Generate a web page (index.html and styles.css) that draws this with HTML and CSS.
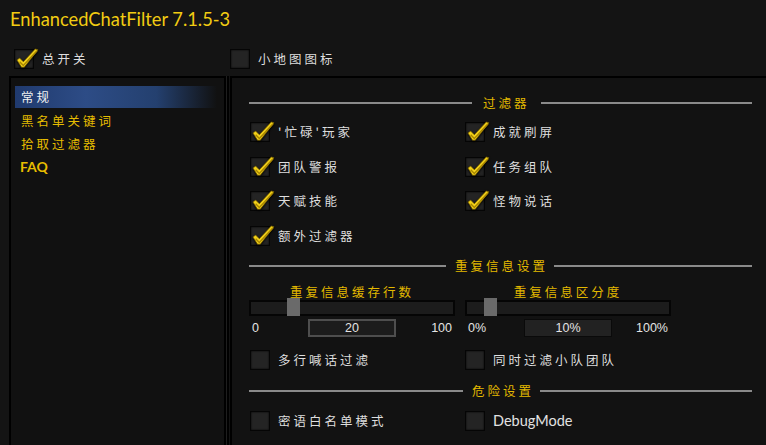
FILE: index.html
```html
<!DOCTYPE html>
<html>
<head>
<meta charset="utf-8">
<link rel="stylesheet" href="styles.css">
</head>
<body>
<div class="frame">
  <div class="title">EnhancedChatFilter 7.1.5-3</div>
  <div class="topbar">
    <label class="cb cb-main"><span class="box checked"><svg class="tick" viewBox="0 0 26 24"><path d="M2 13 L5 11 L9 15 L22 1 L25 2 L10 21 L7 21 Z" fill="#f3d21a" stroke="#6b5500" stroke-width="0.8"/><path d="M5 15 L9 19 L24 3" fill="none" stroke="#a88600" stroke-width="1.6"/></svg></span><span class="cjk">总开关</span></label>
    <label class="cb cb-mini"><span class="box"></span><span class="cjk">小地图图标</span></label>
  </div>
  <div class="main">
    <nav class="side">
      <div class="item active cjk">常规</div>
      <div class="item cjk">黑名单关键词</div>
      <div class="item cjk">拾取过滤器</div>
      <div class="item latin">FAQ</div>
    </nav>
    <section class="content">
      <div class="hdr hdr1"><span class="line"></span><span class="hdr-text cjk">过滤器</span><span class="line"></span></div>
      <div class="grid">
        <label class="cb"><span class="box checked"><svg class="tick" viewBox="0 0 26 24"><path d="M2 13 L5 11 L9 15 L22 1 L25 2 L10 21 L7 21 Z" fill="#f3d21a" stroke="#6b5500" stroke-width="0.8"/><path d="M5 15 L9 19 L24 3" fill="none" stroke="#a88600" stroke-width="1.6"/></svg></span><span class="cjk">'忙碌'玩家</span></label>
        <label class="cb"><span class="box checked"><svg class="tick" viewBox="0 0 26 24"><path d="M2 13 L5 11 L9 15 L22 1 L25 2 L10 21 L7 21 Z" fill="#f3d21a" stroke="#6b5500" stroke-width="0.8"/><path d="M5 15 L9 19 L24 3" fill="none" stroke="#a88600" stroke-width="1.6"/></svg></span><span class="cjk">成就刷屏</span></label>
        <label class="cb"><span class="box checked"><svg class="tick" viewBox="0 0 26 24"><path d="M2 13 L5 11 L9 15 L22 1 L25 2 L10 21 L7 21 Z" fill="#f3d21a" stroke="#6b5500" stroke-width="0.8"/><path d="M5 15 L9 19 L24 3" fill="none" stroke="#a88600" stroke-width="1.6"/></svg></span><span class="cjk">团队警报</span></label>
        <label class="cb"><span class="box checked"><svg class="tick" viewBox="0 0 26 24"><path d="M2 13 L5 11 L9 15 L22 1 L25 2 L10 21 L7 21 Z" fill="#f3d21a" stroke="#6b5500" stroke-width="0.8"/><path d="M5 15 L9 19 L24 3" fill="none" stroke="#a88600" stroke-width="1.6"/></svg></span><span class="cjk">任务组队</span></label>
        <label class="cb"><span class="box checked"><svg class="tick" viewBox="0 0 26 24"><path d="M2 13 L5 11 L9 15 L22 1 L25 2 L10 21 L7 21 Z" fill="#f3d21a" stroke="#6b5500" stroke-width="0.8"/><path d="M5 15 L9 19 L24 3" fill="none" stroke="#a88600" stroke-width="1.6"/></svg></span><span class="cjk">天赋技能</span></label>
        <label class="cb"><span class="box checked"><svg class="tick" viewBox="0 0 26 24"><path d="M2 13 L5 11 L9 15 L22 1 L25 2 L10 21 L7 21 Z" fill="#f3d21a" stroke="#6b5500" stroke-width="0.8"/><path d="M5 15 L9 19 L24 3" fill="none" stroke="#a88600" stroke-width="1.6"/></svg></span><span class="cjk">怪物说话</span></label>
        <label class="cb"><span class="box checked"><svg class="tick" viewBox="0 0 26 24"><path d="M2 13 L5 11 L9 15 L22 1 L25 2 L10 21 L7 21 Z" fill="#f3d21a" stroke="#6b5500" stroke-width="0.8"/><path d="M5 15 L9 19 L24 3" fill="none" stroke="#a88600" stroke-width="1.6"/></svg></span><span class="cjk">额外过滤器</span></label>
      </div>
      <div class="hdr hdr2"><span class="line"></span><span class="hdr-text cjk">重复信息设置</span><span class="line"></span></div>
      <div class="sliders">
        <div class="slider">
          <div class="slabel cjk">重复信息缓存行数</div>
          <div class="track"><span class="thumb" style="left: 36px"></span></div>
          <div class="vals"><span class="vmin">0</span><span class="valbox focus">20</span><span class="vmax">100</span></div>
        </div>
        <div class="slider">
          <div class="slabel cjk">重复信息区分度</div>
          <div class="track"><span class="thumb" style="left: 17px"></span></div>
          <div class="vals"><span class="vmin">0%</span><span class="valbox">10%</span><span class="vmax">100%</span></div>
        </div>
      </div>
      <div class="grid grid-single">
        <label class="cb"><span class="box"></span><span class="cjk">多行喊话过滤</span></label>
        <label class="cb"><span class="box"></span><span class="cjk">同时过滤小队团队</span></label>
      </div>
      <div class="hdr hdr3"><span class="line"></span><span class="hdr-text cjk">危险设置</span><span class="line"></span></div>
      <div class="grid grid-single">
        <label class="cb"><span class="box"></span><span class="cjk">密语白名单模式</span></label>
        <label class="cb"><span class="box"></span><span class="latin-w">DebugMode</span></label>
      </div>
    </section>
  </div>
</div>
</body>
</html>
```

FILE: styles.css
```css
html, body {
  margin: 0;
  padding: 0;
  background: #131313;
}
.frame {
  width: 766px;
  height: 445px;
  overflow: hidden;
  background: #141414;
  color: #dedede;
  font-family: "Noto Sans CJK SC", "Noto Sans", sans-serif;
}
.cjk {
  font-family: "Noto Sans CJK SC", sans-serif;
  font-size: 12.5px;
  letter-spacing: 3px;
  line-height: 16px;
}
.latin {
  font-family: "Lato", "Open Sans", sans-serif;
  font-weight: 700;
  font-size: 14px;
  line-height: 16px;
}
.latin-w {
  font-family: "Lato", "Open Sans", sans-serif;
  font-size: 14.5px;
  line-height: 16px;
  color: #e2e2e2;
}
.title {
  padding: 8px 0 0 10px;
  height: 30px;
  box-sizing: border-box;
  font-family: "Lato", "Open Sans", sans-serif;
  font-size: 18.3px;
  line-height: 22px;
  color: #f2cc12;
}
.topbar {
  display: flex;
  height: 46px;
  padding-top: 19px;
  box-sizing: border-box;
}
.cb {
  display: flex;
  align-items: center;
  gap: 8px;
  height: 20px;
}
.cb-main {
  margin-left: 14px;
  width: 216px;
}
.box {
  position: relative;
  width: 18px;
  height: 18px;
  flex: none;
  background: #242424;
  border: 1px solid #050505;
  box-shadow: inset 0 0 2px #000;
}
.tick {
  position: absolute;
  left: 0px;
  top: -2px;
  width: 24px;
  height: 22px;
  filter: drop-shadow(0 1px 1px #000);
}
.main {
  display: flex;
  height: 369px;
}
.side {
  margin-left: 9px;
  width: 217px;
  border: 2px solid #000;
  box-shadow: 1px 0 0 #1e1e1e, 3px 0 0 #000;
  background: #111111;
  padding: 8px 0 0 4px;
  box-sizing: border-box;
  height: 380px;
}
.item {
  height: 23px;
  display: flex;
  align-items: center;
  padding-left: 6px;
  color: #e6bd00;
}
.item.latin { padding-left: 5px; }
.item.active {
  height: 22px;
  color: #f0f0f0;
  background: linear-gradient(90deg, #203a6e 0%, #2d4c86 35%, #24406f 70%, rgba(30,50,90,0) 100%);
  margin-right: 7px;
  margin-bottom: 1px;
}
.content {
  margin-left: 4px;
  flex: 1;
  border-left: 2px solid #000;
  border-top: 2px solid #000;
  background: #121212;
  padding: 17px 14px 0 17px;
  box-sizing: border-box;
  height: 380px;
}
.hdr {
  display: flex;
  align-items: center;
  height: 16px;
  gap: 8px;
}
.hdr .line {
  flex: 1;
  height: 2px;
  background: #8a8a8a;
}
.hdr-text {
  color: #e3b900;
  margin-right: -3px;
  padding: 0 1px;
}
.hdr1 .line:first-child { flex: 0 0 223px; }
.hdr1 .hdr-text { margin: 0 2px; }
.hdr2 .line:first-child { flex: 0 0 197px; }
.hdr2 { margin-top: 12px; }
.hdr3 { margin-top: 13px; }
.hdr3 .line:first-child { flex: 0 0 214px; }
.grid {
  display: grid;
  grid-template-columns: 215px 1fr;
  row-gap: 14.5px;
  margin-top: 11px;
  padding-left: 1px;
}
.grid-single { margin-top: 12px; }
.sliders {
  display: grid;
  grid-template-columns: 216px 1fr;
  margin-top: 10px;
}
.slider {
  width: 206px;
  display: flex;
  flex-direction: column;
}
.slabel {
  text-align: center;
  color: #e3b900;
  height: 16px;
  line-height: 16px;
  letter-spacing: 3px;
}
.track {
  position: relative;
  height: 12px;
  background: #1c1c1c;
  border: 2px solid #050505;
}
.thumb {
  position: absolute;
  top: -4px;
  width: 13px;
  height: 18px;
  background: #6a6a6a;
}
.vals {
  display: grid;
  grid-template-columns: 1fr auto 1fr;
  align-items: center;
  margin-top: 2px;
  height: 20px;
  font-family: "Liberation Sans", Arial, sans-serif;
  font-size: 12.5px;
  color: #e4e4e4;
  padding: 0 3px;
}
.vmax { text-align: right; }
.valbox {
  width: 86px;
  height: 16px;
  line-height: 16px;
  text-align: center;
  background: #222222;
  border: 1px solid #0a0a0a;
}
.valbox.focus {
  border: 2px solid #4e4e4e;
  height: 14px;
  line-height: 15px;
  width: 84px;
  background: #1c1c1c;
}
```
